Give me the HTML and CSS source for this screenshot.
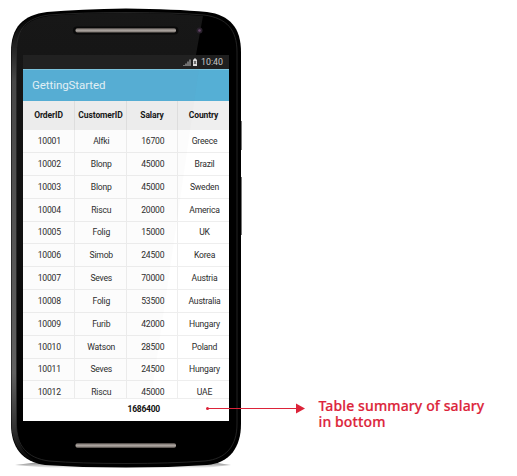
FILE: index.html
```html
<!DOCTYPE html>
<html lang="en">
<head>
<meta charset="utf-8">
<title>GettingStarted</title>
<link rel="stylesheet" href="styles.css">
</head>
<body>
<main class="figure">
  <div class="phone">
    <svg class="shell" width="250" height="476" viewBox="0 0 250 476" aria-hidden="true">
      <defs>
        <linearGradient id="edge" x1="0" y1="0" x2="0" y2="1">
          <stop offset="0" stop-color="#000"/><stop offset=".07" stop-color="#222"/><stop offset=".15" stop-color="#484848"/>
          <stop offset=".8" stop-color="#606060"/><stop offset=".92" stop-color="#333"/><stop offset="1" stop-color="#000"/>
        </linearGradient>
        <linearGradient id="glare" x1="0" y1="0" x2="0" y2="1">
          <stop offset="0" stop-color="#171717"/><stop offset=".55" stop-color="#111"/><stop offset="1" stop-color="#000"/>
        </linearGradient>
        <linearGradient id="metal" x1="0" y1="0" x2="0" y2="1">
          <stop offset="0" stop-color="#6e6763"/><stop offset=".5" stop-color="#aaa39e"/><stop offset="1" stop-color="#77706b"/>
        </linearGradient>
        <linearGradient id="shade" x1="0" y1="0" x2="0" y2="1">
          <stop offset="0" stop-color="#777"/><stop offset="1" stop-color="#fff"/>
        </linearGradient>
      </defs>
      <path d="M15 465L40 462H210L231 465L205 468H50Z" fill="url(#shade)"/>
      <path d="M240 121h2v29h-2zM240 177h2v58h-2z" fill="#777"/>
      <path d="M11 52C11 27 23 15 47 12Q80 9 126 8.500Q175 9 207 12C230 15 241 28 241 52V424C241 447 230 463 207 465Q170 467.500 126 467.500Q80 467.500 45 465C22 462 11 447 11 424Z" fill="#000"/>
      <path d="M11.500 52C12 29 24 17 42 14C25 21 16.500 32 16.500 52V424C17 445 24 456 40 463C22 460 11.500 444 11.500 424Z" fill="url(#edge)"/>
      <path d="M16.500 53C16.500 29 27 19 49 16Q80 13 126 13Q170 13 203 16L195 60L160 426H16.500Z" fill="url(#glare)"/>
      <path d="M16.500 52C16.500 28 27 18 49 15Q80 12.500 126 12.500Q175 12.500 204 15C227 18 237 30 237 52V424C237 446 226 459 205 461Q170 463.500 126 463.500Q80 463.500 49 461C27 458 16.500 446 16.500 424Z" fill="none" stroke="#2c2c2c" stroke-width=".8"/>
      <rect x="73" y="26.500" width="105.500" height="8" rx="4" fill="#090909"/>
      <rect x="75.500" y="28.200" width="100.500" height="4.300" rx="1.800" fill="url(#metal)"/>
      <rect x="75.500" y="443.200" width="100.500" height="4.600" rx="1.800" fill="url(#metal)"/>
      <circle cx="199.500" cy="30.500" r="3" fill="#28202b"/><circle cx="199.500" cy="30.500" r="1.300" fill="#67486a"/>
    </svg>
    <section class="screen">
      <div class="status">
        <svg width="18" height="9" viewBox="0 0 18 9" aria-hidden="true">
          <path d="M.5 7h1v1h-1zM2.500 5.500h1v2.500h-1zM4.500 3.500h1v4.500h-1zM6.500 1.500h1v6.500h-1z" fill="#c4c4c4"/>
          <path d="M10 1.500h1v-1h2v1h1v6.500h-4z" fill="#ddd"/><path d="M11 3l2 3M13 3l-2 3" stroke="#333" stroke-width=".8"/>
        </svg>
        <span class="clock">10:40</span>
      </div>
      <header class="appbar">GettingStarted</header>
      <div class="row head"><span>OrderID</span><span>CustomerID</span><span>Salary</span><span>Country</span></div>
      <div class="rows">
        <div class="row"><span>10001</span><span>Alfki</span><span>16700</span><span>Greece</span></div>
        <div class="row"><span>10002</span><span>Blonp</span><span>45000</span><span>Brazil</span></div>
        <div class="row"><span>10003</span><span>Blonp</span><span>45000</span><span>Sweden</span></div>
        <div class="row"><span>10004</span><span>Riscu</span><span>20000</span><span>America</span></div>
        <div class="row"><span>10005</span><span>Folig</span><span>15000</span><span>UK</span></div>
        <div class="row"><span>10006</span><span>Simob</span><span>24500</span><span>Korea</span></div>
        <div class="row"><span>10007</span><span>Seves</span><span>70000</span><span>Austria</span></div>
        <div class="row"><span>10008</span><span>Folig</span><span>53500</span><span>Australia</span></div>
        <div class="row"><span>10009</span><span>Furib</span><span>42000</span><span>Hungary</span></div>
        <div class="row"><span>10010</span><span>Watson</span><span>28500</span><span>Poland</span></div>
        <div class="row"><span>10011</span><span>Seves</span><span>24500</span><span>Hungary</span></div>
        <div class="row"><span>10012</span><span>Riscu</span><span>45000</span><span>UAE</span></div>
      </div>
      <footer class="summary">1686400</footer>
    </section>
  </div>
  <svg class="arrow" width="100" height="12" viewBox="0 0 100 12" aria-hidden="true">
    <path d="M2 6.500H92" stroke="#dc2339" stroke-width="1.100"/><circle cx="2.500" cy="6.500" r="1.500" fill="#dc2339"/><path d="M91 1.500L100 6.500L91 11.500Z" fill="#dc2339"/>
  </svg>
  <p class="note">Table summary of salary<br>in bottom</p>
</main>
</body>
</html>
```

FILE: styles.css
```css
* { box-sizing: border-box; }
body { margin: 0; background: #fff; font-family: Roboto, sans-serif; }
.figure { position: relative; display: flex; width: 517px; height: 476px; overflow: hidden; }
.phone { position: relative; flex: none; width: 250px; padding: 55px 21px 0 23px; }
.shell { position: absolute; left: 0; top: 0; }
.screen { position: relative; width: 206px; height: 366px; overflow: hidden; background: #fff; }
.screen::after {
  content: "";
  position: absolute;
  inset: 0;
  background: rgba(120, 120, 120, .025);
  clip-path: polygon(0 0, 178px 0, 149px 200px, 128px 343px, 0 343px);
}
.status { display: flex; align-items: center; justify-content: flex-end; height: 14px; padding-right: 6px; background: #1f1f1f; }
.clock { color: #c8c8c8; font-size: 8.8px; line-height: 14px; }
.appbar { height: 32px; padding-left: 9px; border-top: 1px solid #7cc5df; background: #55afd5; color: #e4f2f8; font-size: 11.5px; line-height: 31px; letter-spacing: -.07px; }
.row { display: grid; grid-template-columns: 52px 52px 51px 51px; height: 22.85px; color: #2c2c2c; font-size: 8.6px; line-height: 22px; letter-spacing: -.2px; text-align: center; }
.row span { border-right: 1px solid #eee; border-bottom: 1px solid #eee; padding-left: 1.5px; }
.row span:last-child { border-right: 0; padding-left: 2px; }
.head { height: 29px; background: #efefef; color: #151515; font-weight: 700; line-height: 29px; font-size: 8.5px; letter-spacing: -.1px; }
.head span { border-right-color: #e0e0e0; border-bottom: 0; padding-left: 0; }
.head span:last-child { padding-left: 0; }
.rows { height: 269px; overflow: hidden; border-bottom: 1px solid #eee; }
.summary { padding-left: 104.5px; color: #111; font-size: 8.5px; font-weight: 700; line-height: 20px; letter-spacing: -.25px; }
.arrow { position: absolute; left: 205px; top: 402px; }
.note { margin: 398px 0 0 68.5px; color: #dc2339; font: 500 14px/16px "Noto Sans", sans-serif; letter-spacing: .12px; white-space: nowrap; -webkit-text-stroke: .2px #dc2339; }
```
